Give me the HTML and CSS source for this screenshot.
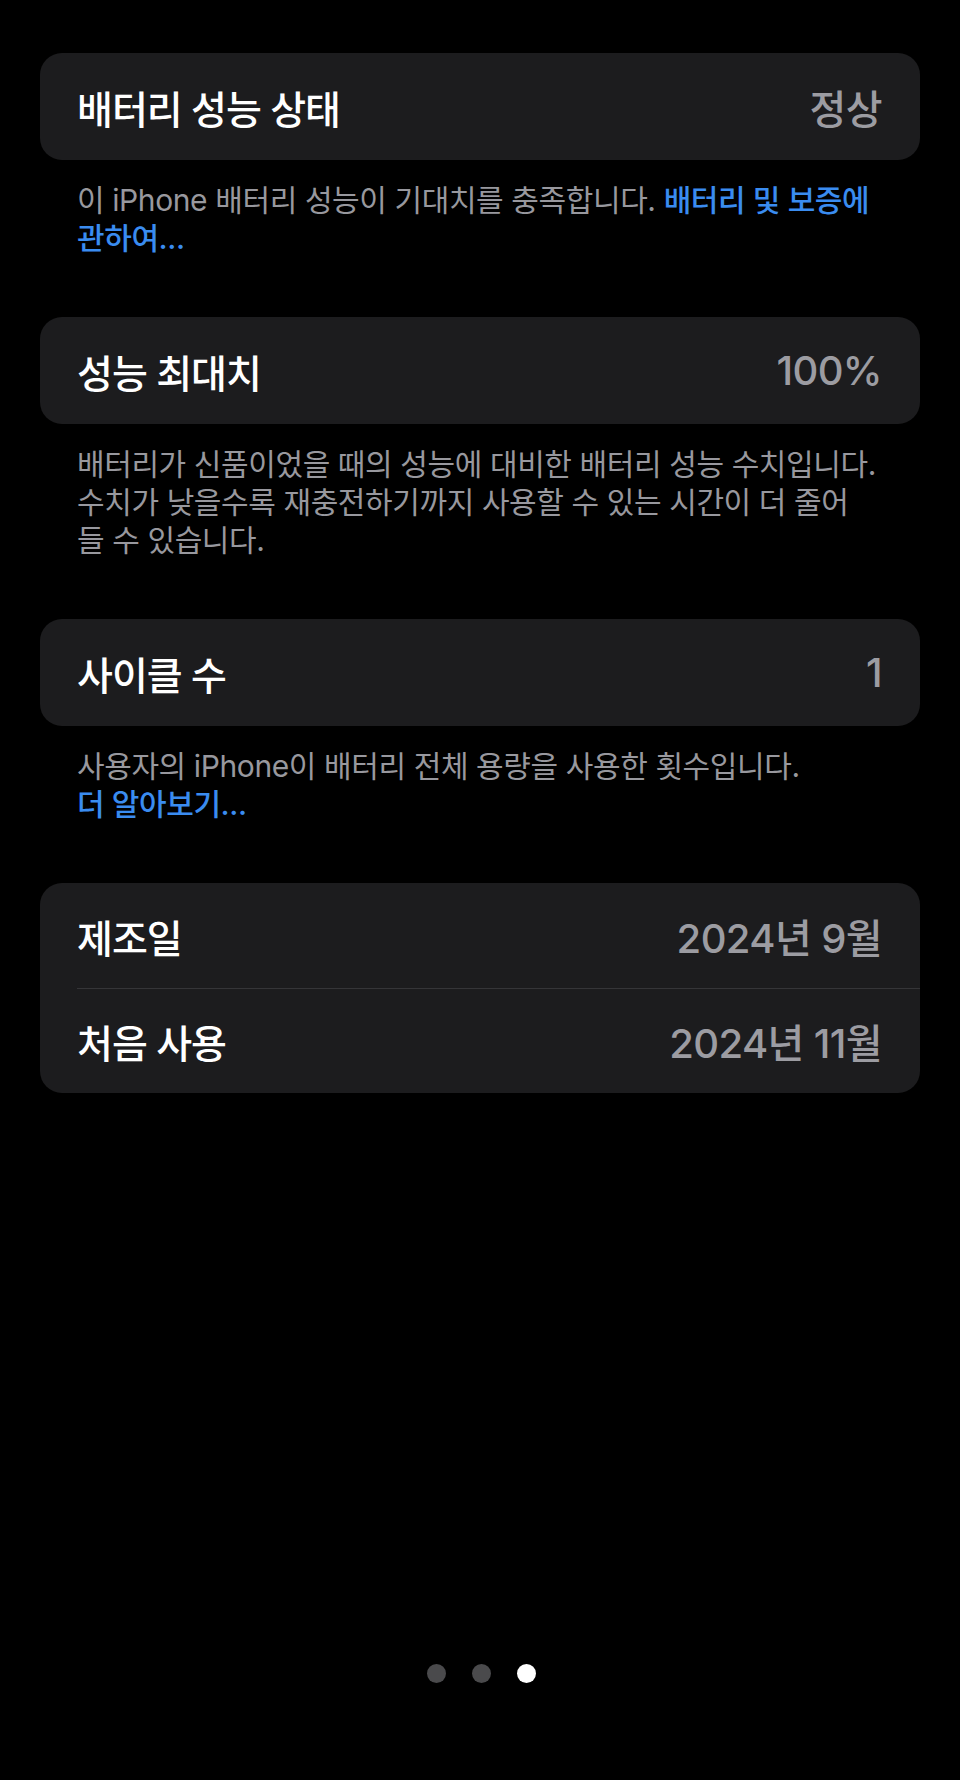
FILE: index.html
```html
<!DOCTYPE html>
<html lang="ko">
<head>
<meta charset="utf-8">
<title>배터리 성능 상태</title>
<link rel="stylesheet" href="styles.css">
</head>
<body>
<div class="screen">
  <section class="group">
    <div class="card">
      <div class="row"><span class="label">배터리 성능 상태</span><span class="value">정상</span></div>
    </div>
    <p class="note">이 iPhone 배터리 성능이 기대치를 충족합니다. <a class="link">배터리 및 보증에<br>관하여...</a></p>
  </section>

  <section class="group">
    <div class="card">
      <div class="row"><span class="label">성능 최대치</span><span class="value">100%</span></div>
    </div>
    <p class="note">배터리가 신품이었을 때의 성능에 대비한 배터리 성능 수치입니다.<br>수치가 낮을수록 재충전하기까지 사용할 수 있는 시간이 더 줄어<br>들 수 있습니다.</p>
  </section>

  <section class="group">
    <div class="card">
      <div class="row"><span class="label">사이클 수</span><span class="value">1</span></div>
    </div>
    <p class="note">사용자의 iPhone이 배터리 전체 용량을 사용한 횟수입니다.<br><a class="link">더 알아보기...</a></p>
  </section>

  <section class="group">
    <div class="card">
      <div class="row row-split"><span class="label">제조일</span><span class="value">2024년 9월</span></div>
      <div class="row row-split"><span class="label">처음 사용</span><span class="value">2024년 11월</span></div>
    </div>
  </section>

  <div class="pager">
    <span class="dot"></span>
    <span class="dot"></span>
    <span class="dot active"></span>
  </div>
</div>
</body>
</html>
```

FILE: styles.css
```css
html, body {
  margin: 0;
  padding: 0;
  background: #000;
}

.screen {
  box-sizing: border-box;
  min-height: 1780px;
  padding: 53px 40px 97px;
  display: flex;
  flex-direction: column;
  font-family: "Inter", "Noto Sans CJK KR", sans-serif;
  color: #fff;
}

.group {
  margin-bottom: 60px;
}

.card {
  background: #1c1c1e;
  border-radius: 22px;
  overflow: hidden;
}

.row {
  height: 107px;
  box-sizing: border-box;
  padding: 0 38px 0 37px;
  display: flex;
  align-items: center;
  justify-content: space-between;
}

.row-split {
  height: 105px;
}

.row-split + .row-split {
  border-top: 1px solid #353538;
  margin-left: 37px;
  padding-left: 0;
}

.label {
  font-size: 39px;
  font-weight: 500;
  letter-spacing: -1px;
  color: #fff;
}

.value {
  font-size: 40px;
  font-weight: 500;
  letter-spacing: -0.6px;
  color: #9c9ca2;
}

.note {
  margin: 0;
  padding: 21px 10px 0 37px;
  font-size: 30px;
  line-height: 38px;
  letter-spacing: -0.4px;
  color: #98989e;
  white-space: nowrap;
}

.link {
  color: #3a8cf0;
  font-weight: 500;
  text-decoration: none;
}

.pager {
  margin-top: auto;
  display: flex;
  justify-content: center;
  gap: 26px;
  padding-left: 2px;
}

.dot {
  width: 19px;
  height: 19px;
  border-radius: 50%;
  background: #4a4a4c;
}

.dot.active {
  background: #fff;
}
```
